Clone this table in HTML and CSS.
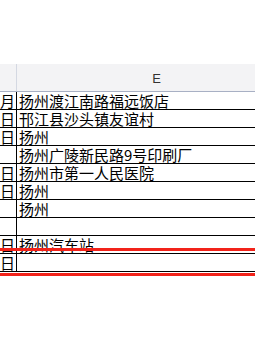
FILE: index.html
```html
<!DOCTYPE html>
<html>
<head>
<meta charset="utf-8">
<link rel="stylesheet" href="styles.css">
</head>
<body>
<div class="sheet">
  <div class="head">
    <div class="hcell hleft"></div>
    <div class="hcell hcol">E</div>
  </div>
  <div class="row"><div class="c0">月</div><div class="c1">扬州渡江南路福远饭店</div></div>
  <div class="row"><div class="c0">日</div><div class="c1">邗江县沙头镇友谊村</div></div>
  <div class="row"><div class="c0">日</div><div class="c1">扬州</div></div>
  <div class="row"><div class="c0"></div><div class="c1">扬州广陵新民路9号印刷厂</div></div>
  <div class="row"><div class="c0">日</div><div class="c1">扬州市第一人民医院</div></div>
  <div class="row"><div class="c0">日</div><div class="c1">扬州</div></div>
  <div class="row"><div class="c0"></div><div class="c1">扬州</div></div>
  <div class="row"><div class="c0"></div><div class="c1"></div></div>
  <div class="row"><div class="c0">日</div><div class="c1">扬州汽车站</div></div>
  <div class="row"><div class="c0">日</div><div class="c1"></div></div>
  <div class="redline r1"></div>
  <div class="redline r2"></div>
</div>
</body>
</html>
```

FILE: styles.css
```css
html {
  overflow: hidden;
}
body {
  margin: 0;
  padding: 0;
  background: #ffffff;
  min-height: 340px;
}
.sheet {
  position: relative;
  margin-top: 64px;
  width: 255px;
  overflow: hidden;
  padding-bottom: 8px;
  font-family: "Noto Sans CJK SC", "Liberation Sans", sans-serif;
}
.head {
  display: grid;
  grid-template-columns: 17px 280px;
  height: 28px;
  box-sizing: border-box;
  background: #f3f3f5;
  border-bottom: 1px solid #a8b0c4;
}
.hcell {
  box-sizing: border-box;
  border-right: 1px solid #d4d8e2;
}
.hcol {
  display: flex;
  align-items: center;
  justify-content: center;
  font-family: "Liberation Sans", sans-serif;
  font-size: 13px;
  color: #333;
  padding-top: 1px;
}
.row {
  display: grid;
  grid-template-columns: 17px 280px;
  height: 18px;
  box-sizing: border-box;
  border-bottom: 1px solid #000;
}
.c0, .c1 {
  font-size: 15px;
  line-height: 17px;
  color: #000;
  white-space: nowrap;
  overflow: hidden;
  box-sizing: border-box;
}
.c0 {
  border-right: 1px solid #000;
  text-align: right;
  direction: rtl;
  padding-right: 1px;
}
.c1 {
  padding-left: 2px;
}
.redline {
  position: absolute;
  left: 0;
  width: 255px;
  height: 3px;
  background: #f2231a;
}
.r1 { top: 184px; }
.r2 { top: 209px; }
```
